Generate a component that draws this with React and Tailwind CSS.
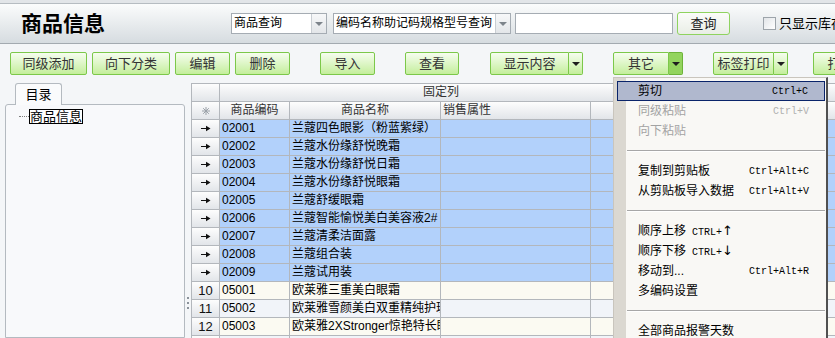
import React from 'react';

// ── Small drawings ─────────────────────────────────────────────────────────────
function Tri({ color = 'border-t-[#1e1e1e]' }) {
  return <div className={`w-0 h-0 border-x-[4px] border-x-transparent border-t-[4px] ${color}`} />;
}

function RowArrow() {
  return (
    <svg width="10" height="7" viewBox="0 0 10 7">
      <path d="M0 3.5H6" stroke="#111" strokeWidth="1" />
      <polygon points="5,0.8 9.5,3.5 5,6.2" fill="#111" />
    </svg>
  );
}

function Star() {
  return (
    <svg width="8" height="8" viewBox="0 0 8 8" stroke="#9aa1a8" strokeWidth="1">
      <path d="M4 0V8M0 4H8M1.2 1.2L6.8 6.8M6.8 1.2L1.2 6.8" />
    </svg>
  );
}

// ── Header ─────────────────────────────────────────────────────────────────────
function Select({ w, text, className = '' }) {
  return (
    <div className={`${w} ${className} shrink-0 h-[21px] flex border border-[#a5acb3] bg-white`}>
      <div className="flex-1 text-[12px] leading-[19px] pl-[2px] overflow-hidden">{text}</div>
      <div className="w-[15px] border-l border-[#c9ced3] bg-gradient-to-b from-[#f7f8f9] to-[#e3e6e9] flex items-center justify-center">
        <Tri color="border-t-[#7d848b]" />
      </div>
    </div>
  );
}

function Header() {
  return (
    <div className="h-[40px] shrink-0 flex items-center bg-gradient-to-b from-[#fbfcfc] to-[#d6dce0] border-b border-[#a3aab0] pl-[21px] whitespace-nowrap">
      <div className="w-[210px] shrink-0 text-[21px] font-bold leading-none">商品信息</div>
      <Select w="w-[96px]" text="商品查询" />
      <Select w="w-[178px]" text="编码名称助记码规格型号查询" className="ml-[6px]" />
      <div className="ml-[4px] w-[158px] h-[21px] shrink-0 border border-[#a5acb3] bg-white" />
      <div className="ml-[4px] w-[53px] h-[23px] shrink-0 flex items-center justify-center rounded-[3px] border border-[#8fd35f] bg-gradient-to-b from-[#fbfcfa] to-[#e9eee6] text-[13px] text-[#222]">
        查询
      </div>
      <div className="ml-[33px] w-[13px] h-[13px] shrink-0 border border-[#9da4aa] bg-gradient-to-br from-[#e2e5e8] to-[#ffffff]" />
      <span className="ml-[3px] text-[13px] shrink-0">只显示库存</span>
    </div>
  );
}

// ── Toolbar ────────────────────────────────────────────────────────────────────
const greenBtn = 'border border-[#7cc84a] bg-gradient-to-b from-[#f6fdef] to-[#c4ee9b] text-[13px] text-[#333]';

function GBtn({ label, w, ml }) {
  return (
    <div className={`${w} ${ml} h-[23px] shrink-0 flex items-center justify-center rounded-[2px] ${greenBtn}`}>
      {label}
    </div>
  );
}

function SplitBtn({ label, w, ml, active }) {
  return (
    <div className={`${ml} h-[23px] shrink-0 flex`}>
      <div className={`${w} flex items-center justify-center rounded-l-[2px] ${greenBtn}`}>{label}</div>
      <div
        className={`w-[14px] flex items-center justify-center rounded-r-[2px] border border-l-0 ${
          active ? 'border-[#6db33a] bg-[#93d45e]' : 'border-[#7cc84a] bg-gradient-to-b from-[#f6fdef] to-[#c4ee9b]'
        }`}
      >
        <Tri />
      </div>
    </div>
  );
}

function Toolbar() {
  return (
    <div className="h-[39px] shrink-0 flex items-start pt-[8px] pl-[10px] whitespace-nowrap">
      <GBtn label="同级添加" w="w-[77px]" ml="" />
      <GBtn label="向下分类" w="w-[78px]" ml="ml-[5px]" />
      <GBtn label="编辑" w="w-[55px]" ml="ml-[5px]" />
      <GBtn label="删除" w="w-[55px]" ml="ml-[5px]" />
      <GBtn label="导入" w="w-[55px]" ml="ml-[30px]" />
      <GBtn label="查看" w="w-[54px]" ml="ml-[30px]" />
      <SplitBtn label="显示内容" w="w-[79px]" ml="ml-[31px]" />
      <SplitBtn label="其它" w="w-[56px]" ml="ml-[30px]" active />
      <SplitBtn label="标签打印" w="w-[61px]" ml="ml-[30px]" />
      <GBtn label="打印" w="w-[55px]" ml="ml-[25px]" />
    </div>
  );
}

// ── Left tree panel ────────────────────────────────────────────────────────────
function TreePanel() {
  return (
    <div className="w-[185px] shrink-0 pl-[5px] flex flex-col">
      <div className="h-[21px] flex items-end">
        <div className="ml-[10px] w-[47px] h-[22px] -mb-[1px] z-[1] flex items-center justify-center rounded-t-[3px] border border-b-0 border-[#b4bac0] bg-[#fafbfc] text-[13px]">
          目录
        </div>
      </div>
      <div className="flex-1 rounded-t-[3px] border border-[#b4bac0] bg-[#f8f9fb] pt-[4px]">
        <div className="flex items-center">
          <div className="ml-[13px] w-[10px] border-t border-dotted border-[#7c7c7c]" />
          <div className="border border-black text-[13px] leading-[13px] bg-white">商品信息</div>
        </div>
      </div>
    </div>
  );
}

// ── Grid ───────────────────────────────────────────────────────────────────────
const rows = [
  { n: '', code: '02001', name: '兰蔻四色眼影（粉蓝紫绿）', bg: 'bg-[#b2d1fb]' },
  { n: '', code: '02002', name: '兰蔻水份缘舒悦晚霜', bg: 'bg-[#b2d1fb]' },
  { n: '', code: '02003', name: '兰蔻水份缘舒悦日霜', bg: 'bg-[#b2d1fb]' },
  { n: '', code: '02004', name: '兰蔻水份缘舒悦眼霜', bg: 'bg-[#b2d1fb]' },
  { n: '', code: '02005', name: '兰蔻舒缓眼霜', bg: 'bg-[#b2d1fb]' },
  { n: '', code: '02006', name: '兰蔻智能愉悦美白美容液2#', bg: 'bg-[#b2d1fb]' },
  { n: '', code: '02007', name: '兰蔻清柔洁面露', bg: 'bg-[#b2d1fb]' },
  { n: '', code: '02008', name: '兰蔻组合装', bg: 'bg-[#b2d1fb]' },
  { n: '', code: '02009', name: '兰蔻试用装', bg: 'bg-[#b2d1fb]' },
  { n: '10', code: '05001', name: '欧莱雅三重美白眼霜', bg: 'bg-[#fbfaf2]' },
  { n: '11', code: '05002', name: '欧莱雅雪颜美白双重精纯护理', bg: 'bg-[#f1f4f9]' },
  { n: '12', code: '05003', name: '欧莱雅2XStronger惊艳特长睫毛膏', bg: 'bg-[#fbfaf2]' },
  { n: '', code: '', name: '', bg: 'bg-[#f1f4f9]' },
];

const line = 'border-[#b3b7bc]';
const headBg = 'bg-gradient-to-b from-[#fdfdfd] to-[#e2e5e9]';

function Grid() {
  return (
    <div className={`flex-1 min-w-0 border-l border-t ${line} overflow-hidden text-[12px]`}>
      {/* Header row 1 */}
      <div className={`h-[18px] flex border-b ${line} ${headBg} text-[#333]`}>
        <div className={`w-[28px] shrink-0 border-r ${line}`} />
        <div className={`w-[443px] shrink-0 border-r ${line} text-center leading-[17px]`}>固定列</div>
        <div className="flex-1" />
      </div>
      {/* Header row 2 */}
      <div className={`h-[18px] flex border-b ${line} ${headBg} text-[#333] leading-[17px]`}>
        <div className={`w-[28px] shrink-0 border-r ${line} flex items-center justify-center`}>
          <Star />
        </div>
        <div className={`w-[70px] shrink-0 border-r ${line} text-center`}>商品编码</div>
        <div className={`w-[151px] shrink-0 border-r ${line} text-center`}>商品名称</div>
        <div className={`w-[150px] shrink-0 border-r ${line} pl-[2px]`}>销售属性</div>
        <div className={`w-[23px] shrink-0 border-r ${line}`} />
        <div className={`w-[50px] shrink-0 border-r ${line}`} />
        <div className="flex-1" />
      </div>
      {/* Data rows */}
      {rows.map((r, i) => (
        <div key={i} className={`h-[18px] flex border-b ${line} leading-[17px] whitespace-nowrap`}>
          <div className={`w-[28px] shrink-0 border-r ${line} ${headBg} flex items-center justify-center text-[13px] text-[#111]`}>
            {r.n || (r.code ? <RowArrow /> : null)}
          </div>
          <div className={`w-[70px] shrink-0 border-r ${line} ${r.bg} pl-[2px] overflow-hidden`}>{r.code}</div>
          <div className={`w-[151px] shrink-0 border-r ${line} ${r.bg} pl-[2px] overflow-hidden`}>{r.name}</div>
          <div className={`w-[150px] shrink-0 border-r ${line} ${r.bg}`} />
          <div className={`w-[23px] shrink-0 border-r ${line} ${r.bg}`} />
          <div className={`w-[50px] shrink-0 border-r ${line} ${r.bg}`} />
          <div className={`flex-1 ${r.bg}`} />
        </div>
      ))}
    </div>
  );
}

// ── Context menu ───────────────────────────────────────────────────────────────
const menu = [
  { label: '剪切', sc: 'Ctrl+C', active: true },
  { label: '同级粘贴', sc: 'Ctrl+V', disabled: true },
  { label: '向下粘贴', disabled: true },
  { sep: true },
  { label: '复制到剪贴板', sc: 'Ctrl+Alt+C' },
  { label: '从剪贴板导入数据', sc: 'Ctrl+Alt+V' },
  { sep: true },
  { label: '顺序上移', inline: 'CTRL+', arrow: '↑' },
  { label: '顺序下移', inline: 'CTRL+', arrow: '↓' },
  { label: '移动到...', sc: 'Ctrl+Alt+R' },
  { label: '多编码设置' },
  { sep: true },
  { label: '全部商品报警天数' },
];

function ContextMenu() {
  return (
    <div className="absolute left-[613px] top-[77px] w-[215px] z-10 bg-[#f9f8f5] border-l border-t border-[#c9c5bd] border-r-2 border-r-[#505050] pt-[3px] pl-[3px] pr-[1px] text-[12px] whitespace-nowrap">
      <div className="absolute left-0 top-0 bottom-0 w-[12px] bg-[#dbd8d1]" />
      {menu.map((m, i) =>
        m.sep ? (
          <div key={i} className="relative h-[20px] flex items-center">
            <div className="ml-[10px] flex-1 border-t border-[#a7a7a7] border-b border-b-white" />
          </div>
        ) : (
          <div
            key={i}
            className={`relative h-[20px] flex items-center pr-[16px] ${
              m.active ? 'bg-[#b0b8ce] border border-[#0a246a] pl-[20px]' : 'pl-[21px]'
            } ${m.disabled ? 'text-[#a3a3a3]' : 'text-black'}`}
          >
            <span>{m.label}</span>
            {m.inline && (
              <span className="ml-[6px] text-[10px] font-['Liberation_Mono',monospace]">
                {m.inline}
                <span className="text-[13px] font-['DejaVu_Sans',sans-serif]">{m.arrow}</span>
              </span>
            )}
            {m.sc && (
              <span className={`ml-auto text-[10px] font-['Liberation_Mono',monospace] ${m.disabled ? 'text-[#b0b0b0]' : ''}`}>
                {m.sc}
              </span>
            )}
          </div>
        )
      )}
    </div>
  );
}

// ── Page ───────────────────────────────────────────────────────────────────────
export default function App() {
  return (
    <div className="relative w-[835px] h-[338px] overflow-hidden flex flex-col bg-[#f4f6f8] text-black font-['Liberation_Sans','Noto_Sans_CJK_SC',sans-serif]">
      <div className="h-[4px] shrink-0 bg-[#e2e5e8] border-b border-[#b6bcc1]" />
      <Header />
      <Toolbar />
      <div className="flex flex-1 min-h-0">
        <TreePanel />
        {/* splitter grip */}
        <div className="w-[6px] shrink-0 flex flex-col items-center gap-[3px] pt-[214px]">
          <div className="w-[2px] h-[2px] bg-[#8b929a]" />
          <div className="w-[2px] h-[2px] bg-[#8b929a]" />
          <div className="w-[2px] h-[2px] bg-[#8b929a]" />
        </div>
        <Grid />
      </div>
      <ContextMenu />
    </div>
  );
}
